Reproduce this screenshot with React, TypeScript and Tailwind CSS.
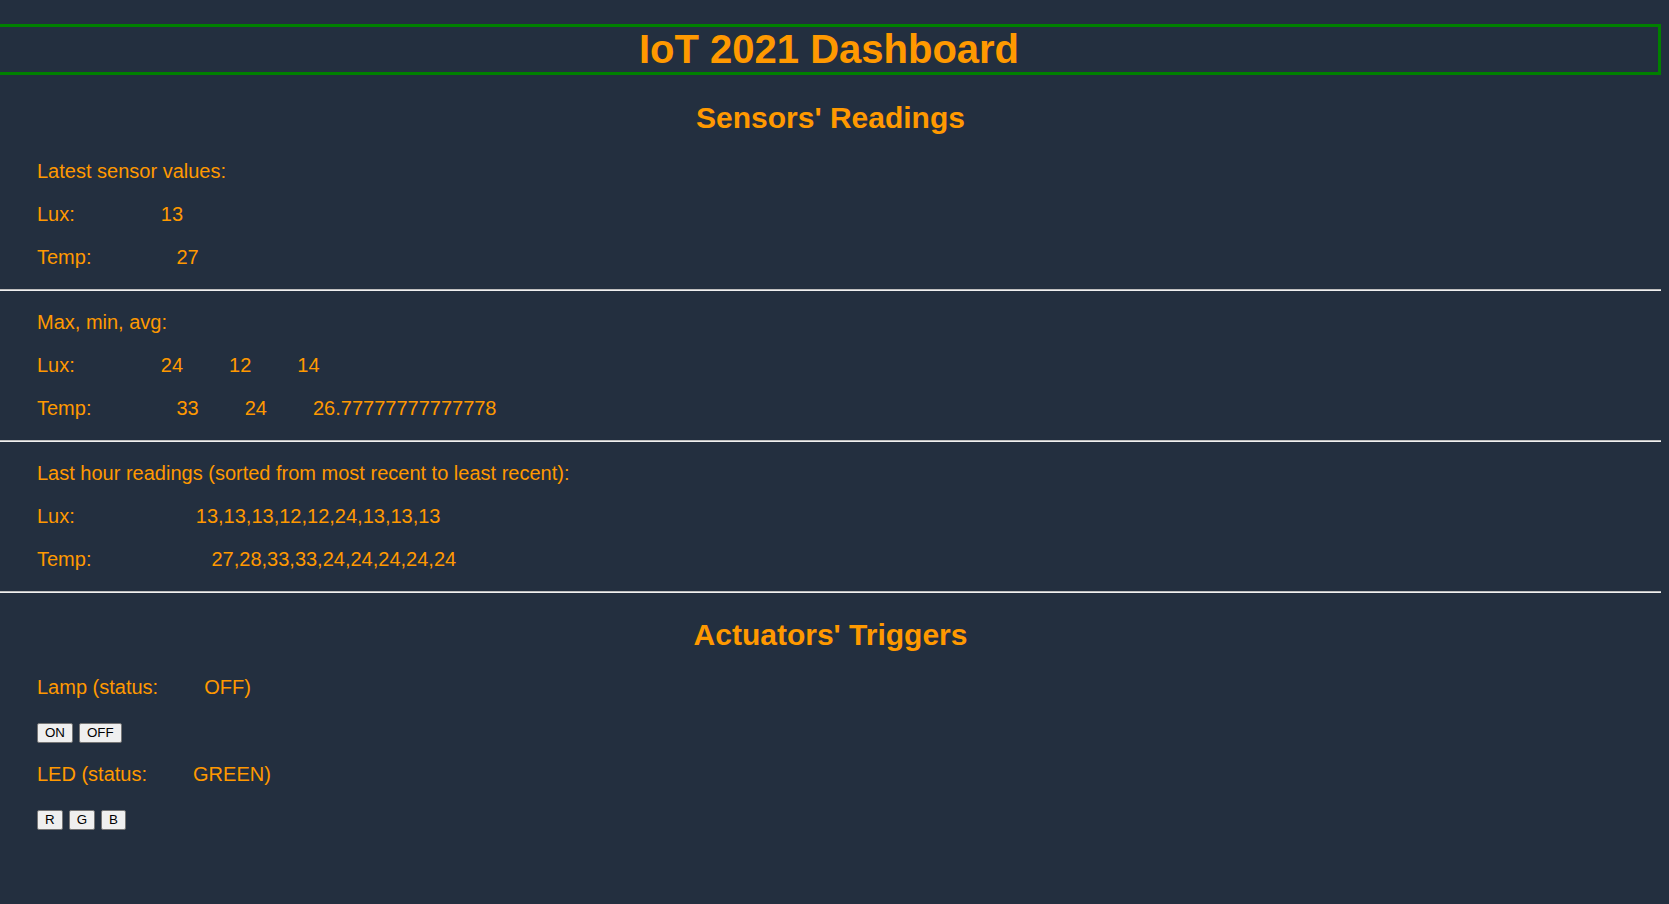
import React from 'react';

const latest = { lux: 13, temp: 27 };
const stats = { lux: [24, 12, 14], temp: [33, 24, 26.77777777777778] };
const lastHour = {
  lux: [13, 13, 13, 12, 12, 24, 13, 13, 13],
  temp: [27, 28, 33, 33, 24, 24, 24, 24, 24],
};

const Divider: React.FC<{ className?: string }> = ({ className = '' }) => (
  <div className={`w-full border-t border-b border-t-[#bdbdbd] border-b-[#f0f0f0] ${className}`} />
);

const Btn: React.FC<{ label: string }> = ({ label }) => (
  <button className="h-[20px] px-[7px] bg-[#efefef] border border-[#767676] rounded-[2px] text-[13.33px] leading-none text-black font-['Liberation_Sans',Arial,sans-serif]">
    {label}
  </button>
);

export default function App() {
  return (
    <div className="min-h-screen overflow-hidden bg-[#232f3f] text-[#ff9900] font-['Liberation_Sans',Arial,sans-serif]">
      <div className="w-[1661px] pt-[24px] pb-[60px] flex flex-col">
        {/* Header */}
        <h1 className="border-y-[3px] border-r-[3px] border-[#008000] text-center text-[40px] font-bold leading-[45px]">
          IoT 2021 Dashboard
        </h1>

        <h2 className="mt-[25px] text-center text-[30px] font-bold leading-[35px]">Sensors' Readings</h2>

        {/* Latest values */}
        <div className="mt-[25px] px-[37px] flex flex-col gap-[20px] text-[20px] leading-[23px]">
          <p>Latest sensor values:</p>
          <p>
            Lux:<span className="ml-[86px]">{latest.lux}</span>
          </p>
          <p>
            Temp:<span className="ml-[85px]">{latest.temp}</span>
          </p>
        </div>

        <Divider className="mt-[20px]" />

        {/* Max min avg */}
        <div className="mt-[20px] px-[37px] flex flex-col gap-[20px] text-[20px] leading-[23px]">
          <p>Max, min, avg:</p>
          <p>
            Lux:<span className="ml-[86px]">{stats.lux[0]}</span>
            <span className="ml-[46px]">{stats.lux[1]}</span>
            <span className="ml-[46px]">{stats.lux[2]}</span>
          </p>
          <p>
            Temp:<span className="ml-[85px]">{stats.temp[0]}</span>
            <span className="ml-[46px]">{stats.temp[1]}</span>
            <span className="ml-[46px]">{stats.temp[2]}</span>
          </p>
        </div>

        <Divider className="mt-[20px]" />

        {/* Last hour */}
        <div className="mt-[20px] px-[37px] flex flex-col gap-[20px] text-[20px] leading-[23px]">
          <p>Last hour readings (sorted from most recent to least recent):</p>
          <p>
            Lux:<span className="ml-[121px]">{lastHour.lux.join(',')}</span>
          </p>
          <p>
            Temp:<span className="ml-[120px]">{lastHour.temp.join(',')}</span>
          </p>
        </div>

        <Divider className="mt-[20px]" />

        <h2 className="mt-[24px] text-center text-[30px] font-bold leading-[35px]">Actuators' Triggers</h2>

        {/* Actuators */}
        <div className="mt-[24px] px-[37px] flex flex-col text-[20px] leading-[23px]">
          <p>
            Lamp (status:<span className="ml-[46px]">OFF)</span>
          </p>
          <div className="mt-[24px] flex gap-[6px]">
            <Btn label="ON" />
            <Btn label="OFF" />
          </div>
          <p className="mt-[20px]">
            LED (status:<span className="ml-[46px]">GREEN)</span>
          </p>
          <div className="mt-[24px] flex gap-[6px]">
            <Btn label="R" />
            <Btn label="G" />
            <Btn label="B" />
          </div>
        </div>
      </div>
    </div>
  );
}
